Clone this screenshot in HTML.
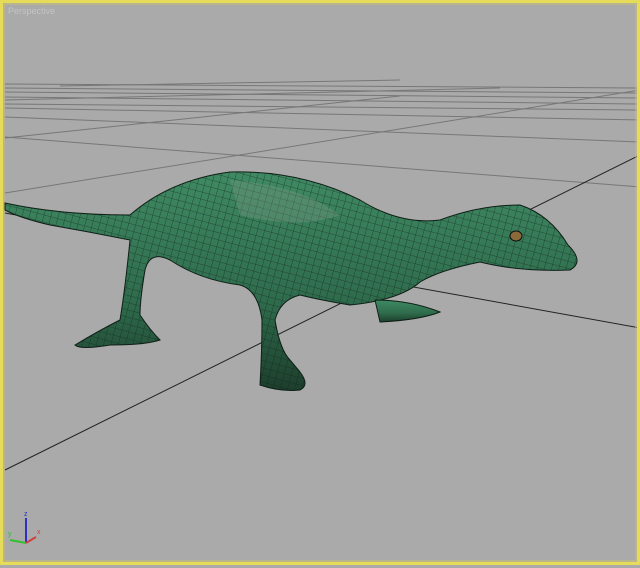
<!DOCTYPE html>
<html><head><style>
html,body{margin:0;padding:0;width:640px;height:568px;overflow:hidden;background:#aaaaaa}
</style></head><body>
<svg width="640" height="568" viewBox="0 0 640 568" xmlns="http://www.w3.org/2000/svg">
<defs>
<linearGradient id="g" x1="0" y1="0" x2="0" y2="1">
<stop offset="0" stop-color="#3f8a63"/><stop offset="0.6" stop-color="#2e6b4c"/><stop offset="1" stop-color="#1d3e2c"/>
</linearGradient>
<pattern id="m" width="7" height="7" patternUnits="userSpaceOnUse" patternTransform="rotate(15)">
<path d="M0 0H7M0 0V7" stroke="#10201a" stroke-width="0.8" fill="none"/>
</pattern>
</defs>
<rect width="640" height="568" fill="#aaaaaa"/>
<g stroke="#777" stroke-width="1" fill="none">
<path d="M5 84 L640 88"/><path d="M5 88 L640 93"/><path d="M5 92 L640 98"/><path d="M5 97 L640 104"/>
<path d="M60 86 L400 80"/><path d="M5 100 L500 88"/>
<path d="M5 108 L640 120"/>
<path d="M5 117 L640 142"/>
<path d="M5 137 L640 187"/>
<path d="M5 193 L640 90"/>
<path d="M5 138 L400 96"/>
<path d="M5 104 L640 110"/>
</g>
<g stroke="#222" stroke-width="1" fill="none">
<path d="M5 470 L640 155"/>
<path d="M5 213 L640 328"/>
</g>
<g fill="url(#g)" stroke="#0f1f17" stroke-width="1">
<path d="M5 203 Q60 215 130 215 Q170 180 230 172 Q300 170 360 200 Q400 225 440 220 Q480 205 520 205 Q550 215 568 245 Q585 262 570 270 Q520 272 480 262 Q440 270 420 282 Q400 300 350 305 Q320 300 300 295 Q280 300 275 320 Q280 350 290 360 L300 372 Q310 385 300 390 Q280 392 260 385 Q262 350 262 320 Q258 290 240 285 Q200 280 170 260 Q150 250 145 270 Q140 300 140 315 Q150 330 160 340 Q145 345 110 345 Q80 350 75 345 Q100 330 120 320 Q125 290 130 240 Q90 232 50 225 Q20 218 5 210 Z"/>
<path d="M375 300 Q410 300 440 312 Q420 320 380 322 Z"/>
</g>
<g fill="url(#m)" opacity="0.7">
<path d="M5 203 Q60 215 130 215 Q170 180 230 172 Q300 170 360 200 Q400 225 440 220 Q480 205 520 205 Q550 215 568 245 Q585 262 570 270 Q520 272 480 262 Q440 270 420 282 Q400 300 350 305 Q320 300 300 295 Q280 300 275 320 Q280 350 290 360 L300 372 Q310 385 300 390 Q280 392 260 385 Q262 350 262 320 Q258 290 240 285 Q200 280 170 260 Q150 250 145 270 Q140 300 140 315 Q150 330 160 340 Q145 345 110 345 Q80 350 75 345 Q100 330 120 320 Q125 290 130 240 Q90 232 50 225 Q20 218 5 210 Z"/>
</g>
<ellipse cx="516" cy="236" rx="6" ry="5" fill="#8a6a3a" stroke="#111"/>
<path d="M230 180 Q300 185 340 215 Q300 230 240 215 Z" fill="#7a9a88" opacity="0.35"/>
<rect x="1.5" y="1.5" width="637" height="562" fill="none" stroke="#e6dc5a" stroke-width="3"/>
<rect x="4" y="4" width="632" height="557" fill="none" stroke="#c8c070" stroke-width="1"/>
<text x="8" y="14" font-family="Liberation Sans, sans-serif" font-size="9" fill="#c4c4c4">Perspective</text>
<line x1="26" y1="543" x2="26" y2="518" stroke="#3030c0" stroke-width="2"/>
<text x="24" y="516" font-family="Liberation Sans, sans-serif" font-size="7" fill="#3030c0">z</text>
<line x1="26" y1="543" x2="10" y2="540" stroke="#30c030" stroke-width="2"/>
<text x="8" y="536" font-family="Liberation Sans, sans-serif" font-size="7" fill="#30c030">y</text>
<line x1="26" y1="543" x2="36" y2="537" stroke="#d04040" stroke-width="2"/>
<text x="37" y="534" font-family="Liberation Sans, sans-serif" font-size="7" fill="#d04040">x</text>
</svg>
</body></html>
